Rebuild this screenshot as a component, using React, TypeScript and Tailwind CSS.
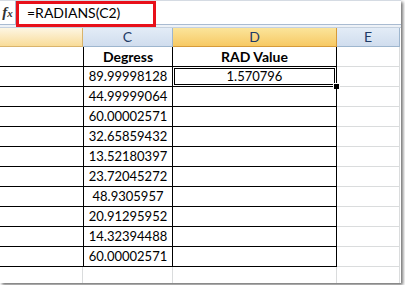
const values = [
  "89.99998128",
  "44.99999064",
  "60.00002571",
  "32.65859432",
  "13.52180397",
  "23.72045272",
  "48.9305957",
  "20.91295952",
  "14.32394488",
  "60.00002571",
];

const font = { fontFamily: "Lato, 'Open Sans', sans-serif" };

function DataRow({ value, selected }: { value: string; selected?: boolean }) {
  return (
    <div className="flex h-[20px] text-[13px] text-black">
      <div className="w-[83px] border-b border-black" />
      <div className="w-[90px] border-x border-b border-black flex items-center justify-center leading-none">
        {value}
      </div>
      <div className="relative w-[164px] border-r border-b border-black flex items-center justify-center leading-none">
        {selected && (
          <>
            <div className="absolute inset-[1px] border border-black" />
            <div className="absolute -right-[4px] -bottom-[4px] w-[7px] h-[7px] bg-black border border-white" />
          </>
        )}
        {selected ? "1.570796" : ""}
      </div>
      <div className="w-[63px] border-r border-b border-[#dadcdd]" />
    </div>
  );
}

export default function App() {
  return (
    <div className="w-[405px] h-[285px] bg-white overflow-hidden" style={font}>
      <div className="relative w-[401px] h-[283px] bg-white shadow-[2px_2px_3px_rgba(0,0,0,0.55)] overflow-hidden">
        {/* Formula bar */}
        <div className="flex h-[25px] border-b border-[#a9bbd1] border-t border-t-[#d5dbe3]">
          <div className="w-[16px] border-r border-[#a9bbd1] flex items-center justify-center">
            <span className="italic font-bold text-[15px] text-[#333] leading-none" style={{ fontFamily: "'Liberation Serif', serif" }}>
              f<span className="text-[11px]">x</span>
            </span>
          </div>
          <div className="flex-1 flex items-center pl-[11px] text-[14px] text-black leading-none">
            =RADIANS(C2)
          </div>
        </div>
        <div className="h-[3px] bg-[#eef2f7] border-b border-[#c5d1df]" />

        {/* Red annotation */}
        <div className="absolute left-[16px] top-[1px] w-[140px] h-[26px] border-[3px] border-[#e8101a]" />

        {/* Column headers */}
        <div className="flex h-[19px] text-[14px] text-[#1d3a66] leading-none">
          <div className="w-[83px] bg-gradient-to-b from-[#fdf6e3] to-[#f9dc98] border-r border-b border-[#d9b46c]" />
          <div className="w-[90px] bg-gradient-to-b from-[#e3ecf7] to-[#d0ddee] border-r border-b border-[#9eb6ce] flex items-center justify-center">
            C
          </div>
          <div className="w-[164px] bg-gradient-to-b from-[#fbe49a] to-[#f7c963] border-r border-b border-[#d69b3a] flex items-center justify-center">
            D
          </div>
          <div className="w-[63px] bg-gradient-to-b from-[#e3ecf7] to-[#d0ddee] border-r border-b border-[#9eb6ce] flex items-center justify-center">
            E
          </div>
        </div>

        {/* Title row */}
        <div className="flex h-[20px] text-[14px] font-bold text-black leading-none">
          <div className="w-[83px] border-b border-black" />
          <div className="w-[90px] border-x border-b border-black flex items-center justify-center">Degress</div>
          <div className="w-[164px] border-r border-b border-black flex items-center justify-center">RAD Value</div>
          <div className="w-[63px] border-r border-b border-[#dadcdd]" />
        </div>

        {values.map((v, i) => (
          <DataRow key={i} value={v} selected={i === 0} />
        ))}

        {/* Blank row */}
        <div className="flex h-[16px]">
          <div className="w-[83px] border-r border-[#dadcdd]" />
          <div className="w-[90px] border-r border-[#dadcdd]" />
          <div className="w-[164px] border-r border-[#dadcdd]" />
          <div className="w-[63px] border-r border-[#dadcdd]" />
        </div>
      </div>
    </div>
  );
}
